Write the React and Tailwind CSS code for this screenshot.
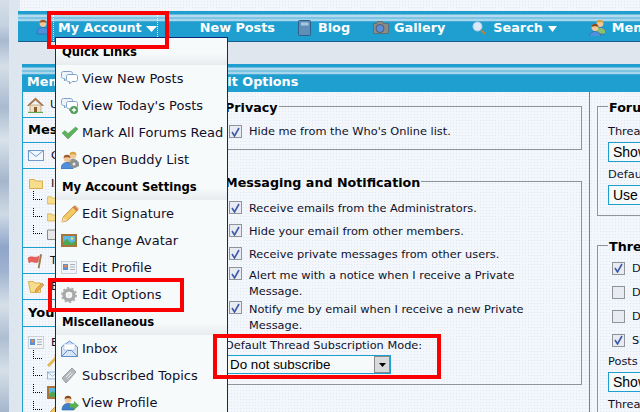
import React from "react";

/* ---------------- ICONS ---------------- */

const Caret = ({ className = "", w = 11 }) => (
  <svg width={w} height="6" viewBox="0 0 11 6" className={className} preserveAspectRatio="none">
    <path d="M0 0h11L5.500 6z" fill="#fff" />
  </svg>
);

const Person = ({ shirt = "#4f8fdc", hair = "#9a5a2a", x = 0, y = 0 }) => (
  <g transform={`translate(${x} ${y})`}>
    <circle cx="7" cy="4.500" r="3.400" fill="#f2c79a" />
    <path d="M3.600 4C3.600 1.500 5 .8 7 .8s3.400.8 3.400 3.200C9 3 5 3 3.600 4z" fill={hair} />
    <path d="M1 15c0-4 2-6.500 6-6.500s6 2.500 6 6.500z" fill={shirt} stroke="#2d5f9e" strokeWidth=".6" />
  </g>
);

const Bubble = ({ x, y, fill = "#fff" }) => (
  <path
    transform={`translate(${x} ${y})`}
    d="M2.500.5h7c1.200 0 2 .8 2 2v3c0 1.200-.8 2-2 2H6L3.500 10V7.500h-1c-1.200 0-2-.8-2-2v-3c0-1.200.8-2 2-2z"
    fill={fill}
    stroke="#7f9fc6"
  />
);

const Speech = ({ plus }) => (
  <svg width="18" height="18" viewBox="0 0 18 18">
    <Bubble x={0} y={1} fill="#eef4fb" />
    <Bubble x={5} y={4} />
    {plus && (
      <g>
        <circle cx="13" cy="13" r="4" fill="#4f9c58" />
        <path d="M13 10.800v4.400M10.800 13h4.400" stroke="#fff" strokeWidth="1.300" />
      </g>
    )}
  </svg>
);

const Check = () => (
  <svg width="18" height="18" viewBox="0 0 18 18">
    <path d="M1 9l3-2.500 3 3L14.500 3 17 5 7 15z" fill="#5fb05f" stroke="#4a9a4a" strokeWidth=".5" />
  </svg>
);

const Buddies = () => (
  <svg width="18" height="18" viewBox="0 0 18 18">
    <Person x={5} y={0} shirt="#d8b15a" hair="#d8a23a" />
    <Person x={-1} y={3} />
    <circle cx="13" cy="13" r="4" fill="#8a8f94" />
    <circle cx="13" cy="13" r="1.500" fill="#e8e8e8" />
  </svg>
);

const Pencil = () => (
  <svg width="18" height="18" viewBox="0 0 18 18">
    <path d="M1 17l1.200-5L12.500 1.700c.8-.8 2-.8 2.800 0l1 1c.8.8.8 2 0 2.800L6 15.800z" fill="#f2cc62" stroke="#c88a3a" />
    <path d="M1 17l1.200-5 3.800 3.800z" fill="#f0d8b0" />
    <path d="M12.500 1.700l3.800 3.800" stroke="#d9764a" strokeWidth="2" />
  </svg>
);

const Picture = () => (
  <svg width="16" height="13" viewBox="0 0 16 13">
    <rect width="16" height="13" fill="#a9743a" />
    <rect x="2" y="2" width="12" height="9" fill="#5cb8e6" />
    <path d="M2 11V8l4-3 4 4 4-2v4z" fill="#4fa84f" />
    <circle cx="11" cy="4.500" r="1.300" fill="#f4e060" />
  </svg>
);

const Card = () => (
  <svg width="16" height="13" viewBox="0 0 16 13">
    <rect x=".5" y=".5" width="15" height="12" fill="#f2f4f8" stroke="#c8d0dc" />
    <rect x="2" y="3" width="5" height="6" fill="#5b8fd0" />
    <circle cx="4.500" cy="5" r="1.500" fill="#e88a4a" />
    <path d="M9 3.500h5M9 6h5M9 8.500h5" stroke="#a8b0bc" />
  </svg>
);

const Gear = () => (
  <svg width="16" height="16" viewBox="0 0 16 16">
    <circle cx="8" cy="8" r="5" fill="none" stroke="#a8a8a8" strokeWidth="3.400" />
    <circle cx="8" cy="8" r="7" fill="none" stroke="#b0b0b0" strokeWidth="2" strokeDasharray="2.200 2.200" />
    <circle cx="8" cy="8" r="2" fill="#eeeeee" />
  </svg>
);

const OpenMail = () => (
  <svg width="17" height="17" viewBox="0 0 17 17">
    <path d="M.5 7L8.500 1l8 6v9.500H.5z" fill="#d6e6f8" stroke="#5f8fc8" />
    <rect x="3" y="4" width="11" height="6" fill="#fff" stroke="#9fbde0" strokeWidth=".6" />
    <path d="M.5 16.500l6-6h4l6 6" fill="none" stroke="#5f8fc8" />
  </svg>
);

const Tag = () => (
  <svg width="16" height="17" viewBox="0 0 16 17">
    <path d="M1 11L11 1l4 4L5 16z" fill="#b4b8bc" stroke="#9a9ea2" />
    <path d="M5 10l5-5M6.500 11.500l5-5" stroke="#eceef0" />
  </svg>
);

const Profile = () => (
  <svg width="18" height="17" viewBox="0 0 18 17">
    <Person x={0} y={1} shirt="#3f7fc8" hair="#8a4a20" />
    <path d="M9 9.500h4V7l5 4.500-5 4.500v-2.500H9z" fill="#5cae54" />
  </svg>
);

const Home = () => (
  <svg width="17" height="16" viewBox="0 0 17 16">
    <path d="M3 8h11v7.500H3z" fill="#efe2c6" stroke="#a88a5a" strokeWidth=".6" />
    <path d="M.5 8.500L8.500 1l8 7.500-1.500 0-6.500-5.500L2 8.500z" fill="#b57a4a" stroke="#8a5a30" strokeWidth=".6" />
    <rect x="7" y="10" width="3" height="5.500" fill="#8a5a30" />
    <path d="M1 15.500h15" stroke="#5fa84f" strokeWidth="1.200" />
  </svg>
);

const Envelope = ({ w = 16, h = 11 }) => (
  <svg width={w} height={h} viewBox="0 0 16 11">
    <rect x=".5" y=".5" width="15" height="10" fill="#f2f7fd" stroke="#6f9ad0" />
    <path d="M.5.500l7.500 6 7.500-6" fill="none" stroke="#6f9ad0" />
  </svg>
);

const Folder = ({ w = 14, h = 11 }) => (
  <svg width={w} height={h} viewBox="0 0 14 11">
    <path d="M.5 1.500h5l1 1.500h7v7.500H.5z" fill="#f8dd8c" stroke="#d8b050" />
  </svg>
);

const Flag = () => (
  <svg width="16" height="16" viewBox="0 0 16 16">
    <path d="M13 1l2 .5L12.500 15.500 10.800 15z" fill="#a07a4a" />
    <path d="M1 5c4-3 7 1 11-2l-1 6C8 11 5 7 2 10z" fill="#e8605a" stroke="#c84a44" strokeWidth=".5" />
  </svg>
);

const FolderEdit = () => (
  <svg width="16" height="14" viewBox="0 0 16 14">
    <path d="M.5 1.500h5l1 1.500h6v9.500H2.500z" fill="#f8dd8c" stroke="#d8b050" />
    <path d="M7 12l1-3 6-6 2 2-6 6z" fill="#e8a850" stroke="#b87a30" strokeWidth=".5" />
  </svg>
);

const Book = () => (
  <svg width="13" height="16" viewBox="0 0 13 16">
    <rect x=".5" y=".5" width="12" height="15" rx="1" fill="#5f8fb8" stroke="#2f5f88" />
    <rect x="3" y="2.500" width="7.500" height="3" fill="#a8c8e0" />
  </svg>
);

const Camera = () => (
  <svg width="16" height="13" viewBox="0 0 16 13" className="-mr-[2px]">
    <path d="M.5 2.500h3l1-2h5l1 2h5v10H.5z" fill="#8a8a88" stroke="#5a5a58" strokeWidth=".6" />
    <circle cx="7" cy="7.500" r="4" fill="#5f8fd8" stroke="#3a3a3a" strokeWidth=".6" />
  </svg>
);

const Magnifier = () => (
  <svg width="14" height="14" viewBox="0 0 14 14">
    <circle cx="5.500" cy="5.500" r="4.500" fill="#dbe9f8" stroke="#b8cde6" />
    <path d="M9 9l4 4" stroke="#b8843a" strokeWidth="2" />
  </svg>
);

const Members = () => (
  <svg width="16" height="16" viewBox="0 0 16 16">
    <Person x={4} y={-1} shirt="#8cc070" hair="#d8a23a" />
    <Person x={-1} y={3} hair="#8a4a20" />
  </svg>
);

const Key = () => (
  <svg width="16" height="16" viewBox="0 0 16 16">
    <circle cx="11.500" cy="4.500" r="3.500" fill="#f2cc62" stroke="#c8983a" />
    <path d="M9 7L1 15" stroke="#e8b850" strokeWidth="3" />
  </svg>
);

const Box = ({ on }) => (
  <span className="w-[13px] h-[13px] shrink-0 border border-[#8f9499] bg-[#e8ebf2] flex items-center justify-center">
    {on && (
      <svg width="9" height="10" viewBox="0 0 9 10">
        <path d="M1 5l2.500 4L8 1" fill="none" stroke="#3f5aa8" strokeWidth="1.600" />
      </svg>
    )}
  </span>
);

const Tree = ({ children }) => (
  <div className="h-[17px] flex items-center pl-[10px]">
    <span className="w-[9px] h-[9px] -mt-2 border-l border-b border-dotted border-black mr-[5px]" />
    {children}
  </div>
);

/* ---------------- DATA ---------------- */

const menu = [
  { head: "Quick Links" },
  { icon: <Speech />, label: "View New Posts" },
  { icon: <Speech plus />, label: "View Today's Posts" },
  { icon: <Check />, label: "Mark All Forums Read" },
  { icon: <Buddies />, label: "Open Buddy List" },
  { head: "My Account Settings" },
  { icon: <Pencil />, label: "Edit Signature" },
  { icon: <Picture />, label: "Change Avatar" },
  { icon: <Card />, label: "Edit Profile" },
  { icon: <Gear />, label: "Edit Options" },
  { head: "Miscellaneous" },
  { icon: <OpenMail />, label: "Inbox" },
  { icon: <Tag />, label: "Subscribed Topics" },
  { icon: <Profile />, label: "View Profile" },
];

const messaging = [
  { text: "Receive emails from the Administrators.", cls: "h-[23px] items-center" },
  { text: "Hide your email from other members.", cls: "h-[23px] items-center" },
  { text: "Receive private messages from other users.", cls: "h-[23px] items-center" },
  { text: "Alert me with a notice when I receive a Private Message.", cls: "h-[34px] pt-[2px]" },
  { text: "Notify me by email when I receive a new Private Message.", cls: "h-[34px] pt-[2px]" },
];

const dither =
  "bg-[radial-gradient(#dfe9f4_0.7px,#f3f7fb_0.8px)] bg-[length:3px_3px]";
const stripes =
  "bg-[linear-gradient(#1f9fd0_0,#1f9fd0_3px,#6fbbdd_3px,#6fbbdd_4px,#b4dcee_4px,#b4dcee_6px,#7fc3e2_6px,#7fc3e2_8px,#a8d6ec_8px,#a8d6ec_10px,#45abd6_10px,#45abd6_11px,#1f9fd0_11px)]";

/* ---------------- UI ---------------- */

const NavItem = ({ icon, label, caret, className = "" }) => (
  <div className={`flex items-center ${className}`}>
    {icon}
    <span className="ml-[7px]">{label}</span>
    {caret && <Caret w={9} className="ml-[5px] mt-[2px]" />}
  </div>
);

const App = () => {
  return (
    <div className="relative w-[640px] h-[412px] overflow-hidden flex bg-[#dfe6ee] font-['DejaVu_Sans',sans-serif] text-[11.35px] text-[#10102a]">
      {/* clouds down the page edge */}
      <div className="w-[18px] shrink-0 flex">
        <div className="w-[9px] bg-[linear-gradient(#d5dfe8_0,#c5d2e0_6%,#a8b9d0_10%,#d5dfe8_16%,#a9bad0_26%,#d8e2ea_34%,#a5b6cc_44%,#cfdae5_52%,#8fa5ca_60%,#a0b3d0_66%,#d5dfe8_74%,#aebed2_82%,#d5dfe8_90%,#a5b6cc_100%)]" />
        <div className="w-[9px] bg-[#dde5ee]" />
      </div>

      <div className="flex-1 min-w-0 flex flex-col">
        <div className={`h-[11px] ml-[2px] ${dither}`} />

        {/* navbar */}
        <div
          className={`h-[31px] shrink-0 border-b border-[#1c5f8e] ${stripes} flex items-center pt-[3px] whitespace-nowrap font-bold text-[12.8px] text-white`}
        >
          <span className="ml-[18px] mt-[-1px]">
            <svg width="14" height="16" viewBox="0 0 14 16">
              <Person />
            </svg>
          </span>
          <div className="ml-[3px] w-[107px] h-[26px] border-x border-dotted border-white flex items-center pl-[4px]">
            My Account
            <Caret className="ml-[4px] mt-[2px]" />
          </div>
          <span className="ml-[42px]">New Posts</span>
          <NavItem className="ml-[23px]" icon={<Book />} label="Blog" />
          <NavItem className="ml-[23px]" icon={<Camera />} label="Gallery" />
          <NavItem className="ml-[27px]" icon={<Magnifier />} label="Search" caret />
          <NavItem className="ml-[32px]" icon={<Members />} label="Members" />
        </div>

        <div className="h-[22px] shrink-0" />

        {/* panel */}
        <div className="ml-[4px] flex-1 min-h-0 flex flex-col">
          <div className={`h-[28px] shrink-0 ${stripes} flex items-center pt-[7px] pl-[5px] font-bold text-[12.8px] text-white whitespace-nowrap`}>
            Members Control Panel - Edit Options
          </div>

          <div className={`flex-1 min-h-0 flex border-l border-[#1f9fd0] ${dither}`}>
            {/* sidebar */}
            <div className="w-[190px] shrink-0 whitespace-nowrap">
              <div className="h-[26px] border-b border-[#1f9fd0] flex items-center pl-[4px] gap-[6px]">
                <Home /> User CP
              </div>
              <div className="h-[25px] border-b border-[#1f9fd0] flex items-center pl-[5px] font-bold text-[13px] text-black">
                Messaging
              </div>
              <div className="h-[26px] border-b border-[#1f9fd0] flex items-center pl-[5px] gap-[7px]">
                <Envelope /> Compose
              </div>
              <div className="h-[79px] border-b border-[#1f9fd0] pt-[7px]">
                <div className="flex items-center pl-[6px] gap-[8px] h-[15px]">
                  <Folder /> Inbox
                </div>
                <Tree><Folder w={11} h={10} /></Tree>
                <Tree><Folder w={11} h={10} /></Tree>
                <Tree><svg width="9" height="12" viewBox="0 0 9 12"><path d="M.5 2h8v9.500h-8z" fill="#e8e8e8" stroke="#8a8a8a" /></svg></Tree>
              </div>
              <div className="h-[26px] border-b border-[#1f9fd0] flex items-center pl-[4px] gap-[7px]">
                <Flag /> Track
              </div>
              <div className="h-[26px] border-b border-[#1f9fd0] flex items-center pl-[5px] gap-[7px]">
                <FolderEdit /> Edit
              </div>
              <div className="h-[27px] border-b border-[#1f9fd0] flex items-center pl-[5px] font-bold text-[13px] text-black">
                Your Profile
              </div>
              <div className="pt-[8px]">
                <div className="flex items-center pl-[5px] gap-[7px] h-[15px]">
                  <Card /> Edit Profile
                </div>
                <Tree><Key /></Tree>
                <Tree><Envelope w={11} h={11} /></Tree>
                <Tree><Picture /></Tree>
                <Tree><Pencil /></Tree>
              </div>
            </div>

            {/* main options */}
            <div className="w-[377px] shrink-0 pl-[6px] pr-[7px] border-r border-[#1f9fd0]">
              <fieldset className="border border-[#8f9499] px-[6px] mt-[4px] h-[54px]">
                <legend className="font-bold text-[12.7px] text-black pt-[2px] px-[1px] -ml-[2px]">Privacy</legend>
                <label className="flex items-center gap-[7px] pl-[3px] mt-[6px]">
                  <Box on /> Hide me from the Who's Online list.
                </label>
              </fieldset>

              <fieldset className="border border-[#8f9499] px-[6px] mt-[21px] h-[214px]">
                <legend className="font-bold text-[12.7px] text-black pt-[2px] px-[1px] -ml-[2px]">
                  Messaging and Notification
                </legend>
                <div className="mt-[4px]">
                  {messaging.map((m) => (
                    <label key={m.text} className={`flex gap-[7px] pl-[3px] leading-[16px] ${m.cls}`}>
                      <Box on />
                      <span className="w-[290px]">{m.text}</span>
                    </label>
                  ))}
                </div>
                <div className="mt-[5px] leading-[14px] -ml-[1px]">Default Thread Subscription Mode:</div>
                <div className="mt-[3px] w-[165px] h-[19px] border border-[#1f9fd0] bg-[#f7fafb] flex items-center justify-between font-['Liberation_Sans',sans-serif] text-[13.4px] text-black pl-[3px]">
                  Do not subscribe
                  <span className="w-[16px] h-[17px] bg-[#d8dadc] border border-[#8a8a8a] flex items-center justify-center">
                    <svg width="7" height="4" viewBox="0 0 7 4"><path d="M0 0h7L3.500 4z" fill="#000" /></svg>
                  </span>
                </div>
              </fieldset>

              <div className="mt-[22px] pl-[60px] font-bold text-[12.7px] text-black whitespace-nowrap">
                Date and Time Options
              </div>
            </div>

            {/* right column */}
            <div className="flex-1 min-w-0 pl-[7px] whitespace-nowrap">
              <fieldset className="border border-[#8f9499] border-r-0 pl-[10px] mt-[4px] h-[120px]">
                <legend className="font-bold text-[12.7px] text-black pt-[2px] px-[1px]">Forum Display</legend>
                <div className="mt-[7px] leading-[14px]">Thread Display</div>
                <div className="mt-[4px] h-[20px] border border-[#1f9fd0] border-r-0 pl-[4px] flex items-center font-['Liberation_Sans',sans-serif] text-[14px] text-black bg-[#f7fafb]">Show</div>
                <div className="mt-[5px] leading-[14px]">Default</div>
                <div className="mt-[4px] h-[20px] border border-[#1f9fd0] border-r-0 pl-[4px] flex items-center font-['Liberation_Sans',sans-serif] text-[14px] text-black bg-[#f7fafb]">Use</div>
              </fieldset>

              <fieldset className="border border-[#8f9499] border-r-0 pl-[10px] mt-[19px] h-[221px]">
                <legend className="font-bold text-[12.7px] text-black pt-[2px] px-[1px]">Thread Display</legend>
                <div className="pl-[4px]">
                  <div className="h-[24px] flex items-center gap-[7px]"><Box on /> Display</div>
                  <div className="h-[24px] flex items-center gap-[7px]"><Box /> Display</div>
                  <div className="h-[24px] flex items-center gap-[7px]"><Box /> Display</div>
                  <div className="h-[24px] flex items-center gap-[7px]"><Box on /> Show</div>
                </div>
                <div className="leading-[14px] mt-[2px]">Posts</div>
                <div className="mt-[4px] h-[20px] border border-[#1f9fd0] border-r-0 pl-[4px] flex items-center font-['Liberation_Sans',sans-serif] text-[14px] text-black bg-[#f7fafb]">Show</div>
                <div className="mt-[5px] leading-[14px]">Thread</div>
              </fieldset>
            </div>
          </div>
        </div>
      </div>

      {/* open dropdown */}
      <div className="absolute left-[55px] top-[37px] w-[173px] h-[380px] bg-[#f7fafb] border-x border-t border-[#12277a] whitespace-nowrap">
        {menu.map((m) =>
          m.head ? (
            <div key={m.head} className="h-[27px] pt-[2px] bg-[linear-gradient(#f7fafb_55%,#e8ecee_100%)] flex items-center pl-[6px] font-bold text-[11.6px] text-black">
              {m.head}
            </div>
          ) : (
            <div key={m.label} className="h-[27px] flex items-center text-[13px] text-[#10102a]">
              <span className="w-[26px] pl-[5px] flex justify-start">{m.icon}</span>
              {m.label}
            </div>
          )
        )}
      </div>

      {/* red annotations */}
      <div className="absolute left-[47px] top-[11px] w-[122px] h-[38px] border-[4px] border-[#fa0000]" />
      <div className="absolute left-[48px] top-[278px] w-[136px] h-[34px] border-[4px] border-[#fa0000]" />
      <div className="absolute left-[213px] top-[334px] w-[228px] h-[45px] border-[4px] border-[#fa0000]" />
    </div>
  );
};

export default App;
